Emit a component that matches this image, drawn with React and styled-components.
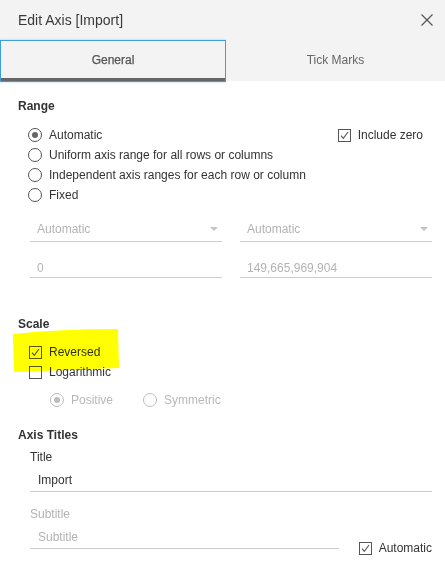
import React from "react";
import styled, { createGlobalStyle } from "styled-components";

const Global = createGlobalStyle`
  html, body { margin: 0; padding: 0; background: #ffffff; }
  body { font-family: "Liberation Sans", Arial, sans-serif; font-size: 12px; color: #333333; }
`;

const Dialog = styled.div`
  width: 445px;
  height: 573px;
  background: #ffffff;
  display: flex;
  flex-direction: column;
  overflow: hidden;
`;

const Header = styled.div`
  height: 40px;
  background: #f3f3f3;
  display: flex;
  align-items: center;
  justify-content: space-between;
  padding: 0 8px 0 18px;
`;

const Title = styled.div`
  font-family: "Liberation Sans", Arial, sans-serif;
  font-size: 14px;
  color: #3a3a3a;
`;

const CloseBtn = styled.button`
  width: 20px;
  height: 20px;
  border: 0;
  padding: 0;
  background: transparent;
  display: flex;
  align-items: center;
  justify-content: center;
`;

const Tabs = styled.div`
  height: 42px;
  display: grid;
  grid-template-columns: 226px 1fr;
  background: #ffffff;
`;

const Tab = styled.div`
  height: ${(p) => (p.$active ? "42px" : "41px")};
  box-sizing: border-box;
  background: #f3f3f3;
  display: flex;
  align-items: center;
  justify-content: center;
  padding-bottom: 2px;
  font-size: 12px;
  color: ${(p) => (p.$active ? "#555555" : "#666666")};
  border: ${(p) => (p.$active ? "1px solid #3d9de0" : "0")};
  box-shadow: ${(p) =>
    p.$active ? "inset 0 -3px 0 #666666, 0 0 2px rgba(61,157,224,0.5)" : "none"};
  -webkit-text-stroke: ${(p) => (p.$active ? "0.25px #555" : "0")};
`;

const Body = styled.div`
  padding: 0 13px 0 18px;
  display: flex;
  flex-direction: column;
`;

const SectionTitle = styled.div`
  font-weight: bold;
  font-size: 12px;
  line-height: 16px;
  color: #333333;
  margin-top: ${(p) => p.$mt}px;
`;

const List = styled.div`
  display: flex;
  flex-direction: column;
  margin-top: ${(p) => p.$mt}px;
  padding-left: ${(p) => p.$indent || 10}px;
  position: relative;
`;

const Row = styled.div`
  height: 20px;
  display: flex;
  align-items: center;
  justify-content: ${(p) => (p.$start ? "flex-start" : "space-between")};
`;

const Option = styled.label`
  display: flex;
  align-items: center;
  gap: 7px;
  color: ${(p) => (p.$disabled ? "#b8b8b8" : "#333333")};
  font-size: 12px;
  margin-right: ${(p) => p.$mr || 0}px;
  position: relative;
`;

const RadioCircle = styled.span`
  width: 14px;
  height: 14px;
  box-sizing: border-box;
  border-radius: 50%;
  border: 1px solid ${(p) => (p.$disabled ? "#bdbdbd" : "#555555")};
  display: flex;
  align-items: center;
  justify-content: center;
  &::after {
    content: "";
    display: ${(p) => (p.$checked ? "block" : "none")};
    width: 6px;
    height: 6px;
    border-radius: 50%;
    background: ${(p) => (p.$disabled ? "#bdbdbd" : "#666666")};
  }
`;

const Box = styled.span`
  width: 13px;
  height: 13px;
  box-sizing: border-box;
  border: 1px solid #555555;
  margin-left: ${(p) => p.$ml || 0}px;
  display: flex;
  align-items: center;
  justify-content: center;
  background: #ffffff;
`;

const FieldGrid = styled.div`
  display: grid;
  grid-template-columns: 1fr 1fr;
  column-gap: 18px;
  padding-left: 12px;
  margin-top: ${(p) => p.$mt}px;
`;

const Field = styled.div`
  height: ${(p) => p.$h}px;
  border-bottom: 1px solid #cccccc;
  display: flex;
  align-items: center;
  justify-content: space-between;
  padding: 0 4px 0 7px;
  color: ${(p) => (p.$muted ? "#b3b3b3" : "#333333")};
  font-size: 12px;
`;

const Caret = styled.span`
  width: 0;
  height: 0;
  border-left: 4px solid transparent;
  border-right: 4px solid transparent;
  border-top: 4px solid #c4c4c4;
`;

const Label = styled.div`
  padding-left: 12px;
  margin-top: ${(p) => p.$mt}px;
  line-height: 16px;
  color: ${(p) => (p.$muted ? "#b3b3b3" : "#333333")};
`;

const TitleField = styled.div`
  margin-left: 12px;
  margin-top: ${(p) => p.$mt || 0}px;
  width: ${(p) => (p.$w ? `${p.$w}px` : "auto")};
  height: 22px;
  box-sizing: content-box;
  border-bottom: 1px solid #cccccc;
  display: flex;
  align-items: center;
  padding-left: 8px;
  color: ${(p) => (p.$muted ? "#b3b3b3" : "#333333")};
`;

const SubRow = styled.div`
  display: flex;
  align-items: flex-end;
  justify-content: space-between;
  margin-top: 4px;
`;

const AutoOpt = styled(Option)`
  margin-bottom: -6px;
  height: 14px;
`;

const IncludeOpt = styled(Option)`
  margin-right: 9px;
`;

const Highlight = styled.svg`
  position: absolute;
  left: -18px;
  top: -15px;
  width: 130px;
  height: 60px;
  mix-blend-mode: multiply;
  pointer-events: none;
`;

const Check = () => (
  <svg width="11" height="11" viewBox="0 0 11 11">
    <path d="M2 5.6 L4.3 8.3 L9 2" fill="none" stroke="#555" strokeWidth="1.1" />
  </svg>
);

const Radio = ({ checked, disabled, children, mr }) => (
  <Option $disabled={disabled} $mr={mr}>
    <RadioCircle $checked={checked} $disabled={disabled} />
    {children}
  </Option>
);

const Checkbox = ({ checked, children, ml }) => (
  <Option>
    <Box $ml={ml}>{checked && <Check />}</Box>
    {children}
  </Option>
);

export default function App() {
  return (
    <>
      <Global />
      <Dialog>
        <Header>
          <Title>Edit Axis [Import]</Title>
          <CloseBtn aria-label="close">
            <svg width="12" height="12" viewBox="0 0 12 12">
              <path d="M0.5 0.5 L11.5 11.5 M11.5 0.5 L0.5 11.5" stroke="#555" strokeWidth="1.2" />
            </svg>
          </CloseBtn>
        </Header>
        <Tabs>
          <Tab $active>General</Tab>
          <Tab>Tick Marks</Tab>
        </Tabs>
        <Body>
          <SectionTitle $mt={16}>Range</SectionTitle>
          <List $mt={11}>
            <Row>
              <Radio checked>Automatic</Radio>
              <IncludeOpt>
                <Box>
                  <Check />
                </Box>
                Include zero
              </IncludeOpt>
            </Row>
            <Row>
              <Radio>Uniform axis range for all rows or columns</Radio>
            </Row>
            <Row>
              <Radio>Independent axis ranges for each row or column</Radio>
            </Row>
            <Row>
              <Radio>Fixed</Radio>
            </Row>
          </List>
          <FieldGrid $mt={12}>
            <Field $h={24} $muted>
              Automatic
              <Caret />
            </Field>
            <Field $h={24} $muted>
              Automatic
              <Caret />
            </Field>
          </FieldGrid>
          <FieldGrid $mt={16}>
            <Field $h={19} $muted>0</Field>
            <Field $h={19} $muted>149,665,969,904</Field>
          </FieldGrid>

          <SectionTitle $mt={38}>Scale</SectionTitle>
          <List $mt={10}>
            <Row>
              <Checkbox checked ml={1}>Reversed</Checkbox>
            </Row>
            <Row>
              <Checkbox ml={1}>Logarithmic</Checkbox>
            </Row>
            <Highlight viewBox="0 0 130 60">
              <path d="M13 7 Q60 2 118 2 L119 41 L14 45 Z" fill="#ffff00" />
            </Highlight>
          </List>
          <List $mt={8} $indent={32}>
            <Row $start>
              <Radio checked disabled mr={30}>Positive</Radio>
              <Radio disabled>Symmetric</Radio>
            </Row>
          </List>

          <SectionTitle $mt={17}>Axis Titles</SectionTitle>
          <Label $mt={6}>Title</Label>
          <TitleField $mt={4}>Import</TitleField>
          <Label $mt={14} $muted>Subtitle</Label>
          <SubRow>
            <TitleField $w={301} $muted>Subtitle</TitleField>
            <AutoOpt>
              <Box>
                <Check />
              </Box>
              Automatic
            </AutoOpt>
          </SubRow>
        </Body>
      </Dialog>
    </>
  );
}
